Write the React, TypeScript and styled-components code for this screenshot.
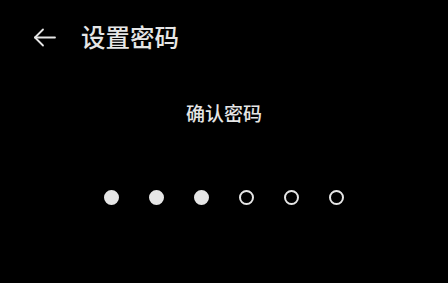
import React from "react";
import styled, { createGlobalStyle } from "styled-components";

const Global = createGlobalStyle`
  html, body { margin: 0; padding: 0; background: #000; }
  body { font-family: "Noto Sans CJK SC", "Noto Sans", sans-serif; }
`;

const Screen = styled.div`
  width: 448px;
  height: 283px;
  background: #000;
  display: flex;
  flex-direction: column;
  overflow: hidden;
`;

const Header = styled.div`
  display: flex;
  align-items: center;
  height: 74px;
  padding-left: 32px;
  gap: 24px;
`;

const BackButton = styled.div`
  width: 25px;
  height: 25px;
  display: flex;
  align-items: center;
  justify-content: center;
  color: #e6e6e6;
`;

const Title = styled.h1`
  margin: 0;
  font-size: 24.5px;
  font-weight: 500;
  color: #e6e6e6;
  line-height: 1;
`;

const Prompt = styled.div`
  margin-top: 29px;
  text-align: center;
  font-size: 19px;
  font-weight: 500;
  color: #e6e6e6;
  line-height: 1;
`;

const Dots = styled.div`
  margin-top: 68px;
  display: flex;
  justify-content: center;
  gap: 30px;
`;

const Dot = styled.div<{ $filled: boolean }>`
  width: 15px;
  height: 15px;
  box-sizing: border-box;
  border-radius: 50%;
  border: 2px solid #e6e6e6;
  background: ${(p) => (p.$filled ? "#e6e6e6" : "transparent")};
`;

export default function App() {
  const filled = 3;
  return (
    <>
      <Global />
      <Screen>
        <Header>
          <BackButton>
            <svg width="25" height="25" viewBox="0 0 25 25" fill="none" stroke="currentColor" strokeWidth="1.8" strokeLinecap="round" strokeLinejoin="round">
              <path d="M23 12.5H3" />
              <path d="M11 4.5L3 12.5L11 20.5" />
            </svg>
          </BackButton>
          <Title>设置密码</Title>
        </Header>
        <Prompt>确认密码</Prompt>
        <Dots>
          {Array.from({ length: 6 }).map((_, i) => (
            <Dot key={i} $filled={i < filled} />
          ))}
        </Dots>
      </Screen>
    </>
  );
}
